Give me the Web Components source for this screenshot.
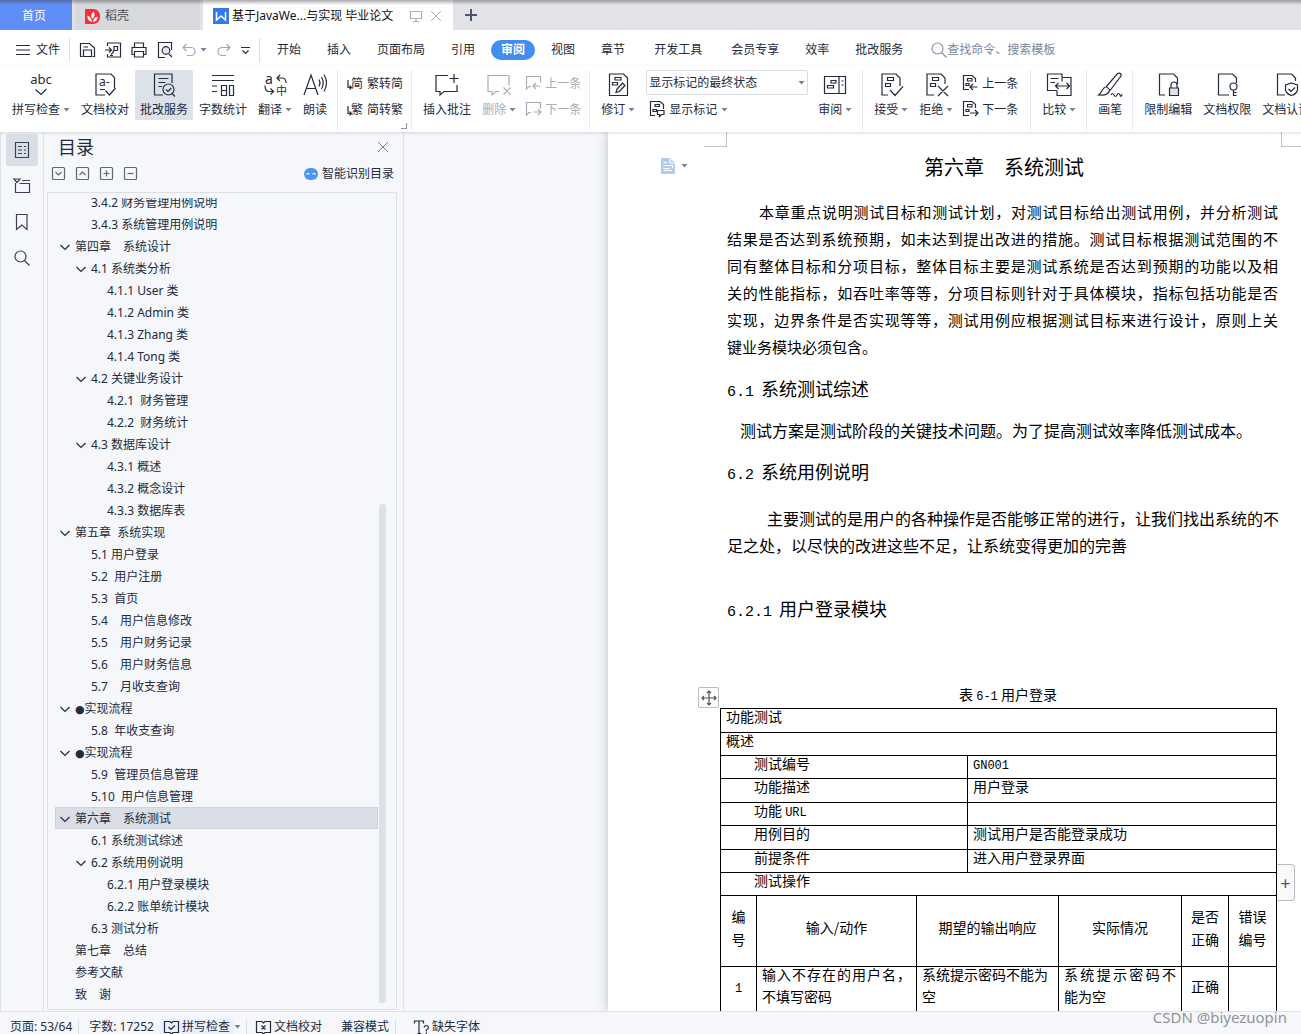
<!DOCTYPE html>
<html lang="zh-CN">
<head>
<meta charset="utf-8">
<title>基于JavaWeb 毕业论文</title>
<style>
  html, body { margin: 0; height: 100%; }
  body { font: 12px/16px "Noto Sans", "Noto Sans CJK SC", sans-serif; color: #232b3d; background: #f5f7fa; overflow: hidden; }
</style>
</head>
<body>
<wps-app></wps-app>
<script>
const ICONS = {
  caret: [7, 4, '<path d="M.5 0h6L3.500 3.500z" fill="#76809a" stroke="none"/>'],
  chev: [10, 10, '<path d="M.5 3 5 7.500 9.500 3"/>'],
  close: [12, 12, '<path d="M1 1l10 10M11 1 1 11" stroke-width="1"/>'],
  plus: [12, 12, '<path d="M6 0v12M0 6h12" stroke-width="2"/>'],
  docer: [15, 15, '<path d="M0 0h8.500a6.500 6.500 0 0 1 6.500 6.500v2A6.500 6.500 0 0 1 8.500 15H0z" fill="#fb2d3c" stroke="none"/><path d="M7 13C3.500 12 2 9.500 2.500 6.500 5 7.500 6.500 9 7 13zM7.300 10C5.500 7 6 4.500 8.800 2.500 10.300 5 9.800 8 7.300 10zM8 13c.3-3 1.800-4.800 4.700-5.500.2 3-1.500 5-4.700 5.500z" fill="#fff" stroke="none"/>'],
  writer: [16, 16, '<rect width="16" height="16" fill="#3478f0" stroke="none"/><path d="M3.500 4v8L8 8l4.500 4V4" stroke="#fff" stroke-width="1.500"/>'],
  screen: [12, 12, '<path d="M.5 1.500h11v7H.5zM6 8.500v3M3 11.500h6"/>'],
  menu: [14, 12, '<path d="M0 1.500h14M0 6h14M0 10.500h14"/>'],
  save: [16, 16, '<path d="M3.500 14.500H1.500V1.500H10.500l5 4.500v8.500h-2M4.500 14.500V8h8v6.500zM4.500 5H9"/>'],
  pdf: [16, 16, '<path d="M2.500 4V1h13v14h-13v-3M0 8h6M4 5.500 6.500 8 4 10.500M6 12.500c3-2 3.500-6 3-8h3.500v4H9M5 13.500h3"/>'],
  print: [16, 16, '<path d="M3.500 5V1h9v4M3.500 12.500H1V5.500h14v7h-2.500M3.500 9.500h9V15h-9z"/>'],
  preview: [16, 16, '<path d="M8 15.500H1.500V.5h13V8M15 15l-3-3"/><circle cx="9" cy="8.500" r="3.800" fill="#dfe3ea"/>'],
  undo: [14, 14, '<path d="M4.500 1 1 4.500 4.500 8M1 4.500h8a4 4 0 0 1 0 8H5"/>'],
  redo: [14, 14, '<path d="M9.500 1 13 4.500 9.500 8M13 4.500H5a4 4 0 0 0 0 8h4"/>'],
  more: [9, 9, '<path d="M0 1.500h9M1.500 4.500 4.500 7.500l3-3"/>'],
  search: [16, 16, '<circle cx="6.500" cy="6.500" r="5.500"/><path d="M10.500 10.500 15.500 15.500"/>'],
  abc: [24, 24, '<text x="12" y="11" text-anchor="middle" font-size="13">abc</text><path d="M6.500 16.500l5.500 5L17.500 16"/>'],
  proof: [24, 24, '<path d="M12 22H3V1h15l3.500 3.500V15M7 16.500h5M12.500 17.500l4 4.500 6-7"/><text x="6" y="13" font-size="12">a-</text>'],
  correct: [24, 24, '<path d="M11 22H2.500V1H20v9M6.500 5.500h10M6.500 9.500h7M6.500 13.500H10M20 20.500l3 3"/><circle cx="16.500" cy="16.500" r="5.500"/><path d="M14 16.500l2 2 3.200-3.500"/>'],
  count: [24, 24, '<path d="M1 2.500h22M1 7.500h22M1 13h5M1 18.500h5M10.500 12.500h5v10h-5zM18.500 12.500h4v10h-4zM10.500 17.500h5"/>'],
  trans: [24, 24, '<text x="2" y="11" font-size="14">a</text><path d="M17 2l-3 3 3 3M14 5h5c3 0 4 1.500 4 5M2 12.500c0 5 1.500 6 4 6h4M7.500 15.500l3 3-3 3"/><text x="13" y="22" font-size="11">中</text>'],
  read: [24, 24, '<path d="M1 22 8 2l7 20M3.500 15.500h9M16 6.500q2 3.500 0 7M18.500 4q3.500 6 0 12M21 1.500q5 8.500 0 17"/>'],
  t2s: [16, 16, '<text x="4" y="13" font-size="12">简</text><path d="M1 5v7.500h3M2.500 10.500l2 2-2 2"/>'],
  s2t: [16, 16, '<text x="4" y="13" font-size="12">繁</text><path d="M1 5v7.500h3M2.500 10.500l2 2-2 2"/>'],
  addnote: [24, 24, '<path d="M13 2.500H1v16h4V22l4-3.500h13V12M19 1v9M14.500 5.500h9"/>'],
  delnote: [24, 24, '<path d="M12 18.500H9L5 22v-3.500H1v-16h21v10M16.500 14.500l7 7M23.500 14.500l-7 7"/>'],
  prevnote: [16, 16, '<path d="M6 11.500H4L1.500 14V1.500h14v6M15.500 11H8.500M11 8l-3 3 3 3"/>'],
  nextnote: [16, 16, '<path d="M6 11.500H4L1.500 14V1.500h14v6M8.500 11h7M13 8l3 3-3 3"/>'],
  revise: [24, 24, '<path d="M3.500 1h14l4 4v17.500h-18zM9 4.500h6v2.500H9zM6.500 9.500h5v2.500h-5z"/><path d="M10 19.500l1-3.500 5.500-6 2.500 2.500-5.500 6z" fill="#e4e7ed"/>'],
  marks: [16, 16, '<path d="M6 14.500H1.500v-14H11l3.500 3V8M6 3.500h4.500v2H6zM4 8.500h3.500v2H4zM8.500 9.500h6.500v4h-2.500l-2 2v-2h-2z"/>'],
  pane: [24, 24, '<path d="M1.500 3.500h21v17h-21zM16 3.500v17M8 7.500h5v2.500H8zM4.500 12.500h6V15h-6zM18.500 8h2M18.500 12h2"/>'],
  accept: [24, 24, '<path d="M9 22H3V1h14l4 4v8M8.500 4.500h6v3h-6zM6.500 10.500h5v3h-5zM11 17l5 5.500 8-9"/>'],
  reject: [24, 24, '<path d="M10 22H3V1h14l4 4v6M8.500 4.500h6v3h-6zM6.500 10.500h5v3h-5zM14 13l10 10M24 13 14 23"/>'],
  prevrev: [16, 16, '<path d="M7 14.500H1.500v-14H10l3.500 3V7M5.500 3.500H10v2.500H5.500zM4 8.500h3v2H4zM15.500 12H8.500M11 9l-3 3 3 3"/>'],
  nextrev: [16, 16, '<path d="M7 14.500H1.500v-14H10l3.500 3V7M5.500 3.500H10v2.500H5.500zM4 8.500h3v2H4zM8 12h7.500M13 9l3 3-3 3"/>'],
  compare: [24, 24, '<path d="M10 17.500H.5V1H15v3M3.500 5.500h8M3.500 9.500H8M15 4.500h9v18H10v-5M15 4.500v4M8.500 13h14M11.500 10l-3 3 3 3M19.500 10l3 3-3 3"/>'],
  brush: [24, 24, '<path d="M8 14 19.500.5q2-1 3.500.5v2L12 17.500M8 14q2.500.5 4 3.500M7.500 14C4 15 4.500 19.500.5 22c5 .5 10 0 11-4.500M13 22q1.500-3 3 0t3 0 3 0 2-1"/>'],
  lock: [24, 24, '<path d="M9 22H3.500V1h14l4 4v6"/><path d="M13.500 15h9v7.500h-9z" fill="#dde1e8"/><path d="M15 15v-3a3 3 0 0 1 6 0v3"/>'],
  key: [24, 24, '<path d="M14 22H3.500V1h14l4 4v5M18.500 17v6M18.500 19.500h3M18.500 22.500h3"/><circle cx="18.500" cy="13.500" r="3.500"/>'],
  shield: [24, 24, '<path d="M11 22H3.500V1h14l4 4v3M17.500 10l6 2v5q-1 4-6 5.500-5-1.500-6-5.500v-5zM14.500 16l2.500 2.500 4-4"/>'],
  outline: [16, 16, '<path d="M1.500.5h13v15h-13zM4 4.500h4M10 4.500h2M4 8h4M10 8h2M4 11.500h4M10 11.500h2"/>'],
  tree: [16, 16, '<path d="M0 1h6L3 4.500zM8 2.500h8M1.500 5v9.500h14v-9h-10"/>'],
  mark: [16, 16, '<path d="M2.500 .5h10.500V15.500L7.750 11 2.500 15.500z"/>'],
  boxdown: [13, 13, '<rect x=".5" y=".5" width="12" height="12" rx="1"/><path d="M3.500 5l3 3 3-3"/>'],
  boxup: [13, 13, '<rect x=".5" y=".5" width="12" height="12" rx="1"/><path d="M3.500 8l3-3 3 3"/>'],
  boxplus: [13, 13, '<rect x=".5" y=".5" width="12" height="12" rx="1"/><path d="M3.500 6.500h6M6.500 3.500v6"/>'],
  boxminus: [13, 13, '<rect x=".5" y=".5" width="12" height="12" rx="1"/><path d="M3.500 6.500h6"/>'],
  robot: [14, 12, '<rect y="0" width="14" height="12" rx="6" fill="#4b97f5" stroke="none"/><path d="M2.500 6.500q1.500-2 3 0M8.500 6.500q1.500-2 3 0" stroke="#fff"/>'],
  pagefmt: [14, 16, '<path d="M0 0h9l5 5v11H0z" fill="#b5cbec" stroke="none"/><path d="M9 0v5h5M2.500 4.500h4M2.500 7.500h9v2.500M2.500 10.500h6M3 12.500h8" stroke="#fff"/>'],
  move: [16, 16, '<path d="M8 1v14M1 8h14M6 3l2-2 2 2M6 13l2 2 2-2M3 6 1 8l2 2M13 6l2 2-2 2"/>'],
  bookcheck: [15, 14, '<path d="M6 1.500H.5v11H6L7.500 14 9 12.500h5.500v-11H9L7.500 3zM4.500 7l2.500 2.500 4-4"/>'],
  bookx: [15, 14, '<path d="M6 1.500H.5v11H6L7.500 14 9 12.500h5.500v-11H9L7.500 3zM5.500 5.500l4 4M9.500 5.500l-4 4"/>'],
  font: [15, 14, '<path d="M.5 3.500V1h9v2.500M5 1v12M3.500 13.500h3.500M10 7.500q.5-2 2.300-2t2.200 2q0 1.300-2.200 2.500v1.500M12.300 12.500v1.500"/>'],
  corner: [6, 6, '<path d="M5.500 0v5.500H0"/>']
};

class WpsIcon extends HTMLElement {
  connectedCallback() {
    const [w, h, body] = ICONS[this.getAttribute('name')];
    this.attachShadow({ mode: 'open' }).innerHTML = `<style>:host{display:inline-flex;flex:none}
      svg{display:block;fill:none;stroke:currentColor;stroke-width:1.2;overflow:visible}
      text{fill:currentColor;stroke:none;font-family:"Noto Sans","Noto Sans CJK SC",sans-serif}</style>
      <svg width="${w}" height="${h}" viewBox="0 0 ${w} ${h}" aria-hidden="true">${body}</svg>`;
  }
}
customElements.define('wps-icon', WpsIcon);

const BASE = `<style>*{box-sizing:border-box}button{font:inherit;color:inherit;background:none;border:0;margin:0;padding:0;display:flex;align-items:center;white-space:nowrap}</style>`;
const define = (name, render) => customElements.define(name, class extends HTMLElement {
  connectedCallback() { this.attachShadow({ mode: 'open' }).innerHTML = BASE + render(this); }
});
const icon = n => `<wps-icon name="${n}"></wps-icon>`;

define('wps-tabs', () => `<style>
  :host{display:flex;height:30px;background:#e2e3e7;gap:3px;position:relative}
  :host::after{content:"";position:absolute;inset:0 0 auto;height:5px;background:linear-gradient(rgba(70,70,75,.45),rgba(70,70,75,0))}
  button{height:30px;gap:5px;padding-top:2px}
  .home{width:72px;justify-content:center;padding-right:4px;background:#5f8ef8;color:#fff}
  .doc{width:125px;padding-left:10px;background:#d8d9dc;color:#4a4f5a}
  .on{width:250px;padding-left:10px;background:#fff;color:#111;gap:3px}
  .on .s{display:flex;color:#a9b0c6;margin-left:14px}.on .s+.s{margin-left:5px}
  .add{margin-left:9px;color:#4c5674;padding:0}
  </style><button class="home">首页</button><button class="doc">${icon('docer')}稻壳</button>
  <button class="on">${icon('writer')}<span>基于JavaWe...与实现 毕业论文</span><span class="s">${icon('screen')}</span><span class="s">${icon('close')}</span></button>
  <button class="add" aria-label="新建">${icon('plus')}</button>`);

define('wps-menu', () => `<style>
  :host{display:flex;align-items:center;height:36px;background:#fff;padding:4px 0 0 16px;overflow:hidden}
  .file{gap:6px}.sep{width:1px;height:24px;background:#dcdfe5;margin:0 9px}
  .quick{display:flex;align-items:center;gap:10px}.dim{color:#a3a8b3}
  .dim.u{gap:4px;margin-left:-1px}
  nav{display:flex;align-items:center;margin-left:-5px}
  nav button{padding:0 13px}nav .w{padding:0 16px}
  nav .on{margin:0 3px;padding:0 10px;height:20px;border-radius:10px;background:#438cf1;color:#fff;font-weight:700}
  label{display:flex;align-items:center;margin-left:15px;color:#8b94a8;flex:1}
  input{font:inherit;border:0;outline:0;padding:0;background:none;width:100%;min-width:0}
  input::placeholder{color:#7c869c;opacity:1}
  </style><button class="file">${icon('menu')}文件</button><span class="sep"></span>
  <div class="quick"><button aria-label="保存">${icon('save')}</button><button aria-label="输出PDF">${icon('pdf')}</button><button aria-label="打印">${icon('print')}</button><button aria-label="预览">${icon('preview')}</button>
  <button class="dim u" aria-label="撤销">${icon('undo')}${icon('caret')}</button><button class="dim" aria-label="恢复">${icon('redo')}</button><button aria-label="更多">${icon('more')}</button></div><span class="sep"></span>
  <nav><button>开始</button><button>插入</button><button>页面布局</button><button>引用</button><button class="on">审阅</button><button>视图</button><button>章节</button><button class="w">开发工具</button><button>会员专享</button><button>效率</button><button>批改服务</button></nav>
  <label>${icon('search')}<input type="text" aria-label="查找" placeholder="查找命令、搜索模板"></label>`);

define('ribbon-button', el => `<style>
  :host{display:block;flex:none}
  button{flex-direction:column;height:50px;padding:3px 5px 0;border-radius:2px}
  .t{display:flex;align-items:center;gap:3px;margin-top:5px}
  .i{display:flex}
  :host([small]) button{flex-direction:row;height:26px;padding:0 3px;gap:4px}
  :host([small]) .t{margin:0;gap:4px;padding-top:2px}
  :host([on]) button{background:#dce2e8}
  :host([off]) button{color:#a9adb6}
  </style><button><span class="i">${icon(el.getAttribute('icon'))}</span><span class="t"><span><slot></slot></span>${el.hasAttribute('caret') ? icon('caret') : ''}</span></button>`);

const big = (i, t, a = '') => `<ribbon-button icon="${i}" ${a}>${t}</ribbon-button>`;
const sm = (i, t, a = '') => big(i, t, 'small ' + a);
define('wps-ribbon', () => `<style>
  :host{display:flex;height:66px;background:#fff;padding:4px 0 0 7px;gap:1px;overflow:hidden;position:relative;z-index:1;box-shadow:0 1px 3px rgba(0,0,0,.15)}
  .sep{flex:none;width:1px;height:60px;background:#e9ebef;margin:0 5px 0 4px}
  .col{display:flex;flex-direction:column;flex:none}
  .end{position:relative}.end>wps-icon{position:absolute;right:-1px;bottom:3px;color:#8e96a8}
  .state{padding:0 4px 0 5px}.wide{padding-right:4px}
  .pick{display:grid;align-items:center;justify-items:end;margin-bottom:1px}
  .pick>*{grid-area:1/1}.pick wps-icon{margin-right:3px;pointer-events:none}
  select{appearance:none;font:inherit;color:inherit;width:162px;height:25px;border:1px solid #d9dce3;border-radius:2px;background:#fff;padding:0 16px 0 2px}
  </style>
  ${big('abc', '拼写检查', 'caret')}${big('proof', '文档校对')}${big('correct', '批改服务', 'on')}${big('count', '字数统计')}${big('trans', '翻译', 'caret')}${big('read', '朗读')}<span class="sep"></span>
  <div class="col end">${sm('t2s', '繁转简')}${sm('s2t', '简转繁')}${icon('corner')}</div><span class="sep"></span>
  ${big('addnote', '插入批注')}${big('delnote', '删除', 'caret off')}<div class="col">${sm('prevnote', '上一条', 'off')}${sm('nextnote', '下一条', 'off')}</div><span class="sep"></span>
  ${big('revise', '修订', 'caret')}<div class="col state"><label class="pick"><select aria-label="标记状态"><option>显示标记的最终状态</option></select>${icon('caret')}</label>${sm('marks', '显示标记', 'caret')}</div>
  ${big('pane', '审阅', 'caret')}<span class="sep"></span>
  ${big('accept', '接受', 'caret')}${big('reject', '拒绝', 'caret')}<div class="col wide">${sm('prevrev', '上一条')}${sm('nextrev', '下一条')}</div><span class="sep"></span>
  ${big('compare', '比较', 'caret')}<span class="sep"></span>${big('brush', '画笔')}<span class="sep"></span>${big('lock', '限制编辑')}${big('key', '文档权限')}${big('shield', '文档认证')}`);

define('side-rail', () => `<style>
  :host{display:flex;flex-direction:column;gap:4px;flex:none;width:44px;padding:2px 0 0 5px;border:solid #dfe2e8;border-width:0 1px;color:#39425a}
  button{width:32px;height:32px;justify-content:center;border-radius:2px}.on{background:#dadfe7}
  </style><button class="on" aria-label="目录">${icon('outline')}</button><button aria-label="章节">${icon('tree')}</button><button aria-label="书签">${icon('mark')}</button><button aria-label="查找">${icon('search')}</button>`);

define('toc-item', el => `<style>
  :host{display:flex;align-items:center;height:22px;box-sizing:border-box;white-space:pre;padding:2px 0 0 calc(4px + 16px*var(--lv,0));border:1px solid transparent}
  :host([lv="1"]){--lv:1}:host([lv="2"]){--lv:2}
  :host([on]){background:#dadee6;border-color:#cdd3de}
  .c{width:15px;display:flex;align-items:center}
  ::slotted(b){font:11px/16px "DejaVu Sans"}
  </style><span class="c">${el.hasAttribute('open') ? icon('chev') : ''}</span><span><slot></slot></span>`);

const TOC = [
  [1, '3.4.2 财务管理用例说明'], [1, '3.4.3 系统管理用例说明'], [0, '第四章　系统设计', 'open'], [1, '4.1 系统类分析', 'open'],
  [2, '4.1.1 User 类'], [2, '4.1.2 Admin 类'], [2, '4.1.3 Zhang 类'], [2, '4.1.4 Tong 类'], [1, '4.2 关键业务设计', 'open'],
  [2, '4.2.1  财务管理'], [2, '4.2.2  财务统计'], [1, '4.3 数据库设计', 'open'], [2, '4.3.1 概述'], [2, '4.3.2 概念设计'], [2, '4.3.3 数据库表'],
  [0, '第五章  系统实现', 'open'], [1, '5.1 用户登录'], [1, '5.2  用户注册'], [1, '5.3  首页'], [1, '5.4　用户信息修改'], [1, '5.5　用户财务记录'],
  [1, '5.6　用户财务信息'], [1, '5.7　月收支查询'], [0, '<b>●</b>实现流程', 'open'], [1, '5.8  年收支查询'], [0, '<b>●</b>实现流程', 'open'],
  [1, '5.9  管理员信息管理'], [1, '5.10  用户信息管理'], [0, '第六章　系统测试', 'open on'], [1, '6.1 系统测试综述'], [1, '6.2 系统用例说明', 'open'],
  [2, '6.2.1 用户登录模块'], [2, '6.2.2 账单统计模块'], [1, '6.3 测试分析'], [0, '第七章　总结'], [0, '参考文献'], [0, '致　谢']];
define('toc-panel', () => `<style>
  :host{display:flex;flex-direction:column;flex:none;width:360px;padding:0 6px 1px 3px;border-right:1px solid #dfe2e8}
  header{display:flex;justify-content:space-between;align-items:center;height:29px;padding:0 8px 0 11px}
  h2{font-size:18px;line-height:24px;font-weight:400;margin:0}header button{color:#737b8d}
  .tools{display:flex;align-items:center;gap:11px;padding:0 3px 0 5px;height:24px;color:#5f6778}
  .smart{margin-left:auto;gap:4px;color:#232b3d;padding-top:2px}
  .box{flex:1;min-height:0;margin-top:7px;border:1px solid #dde0e7;border-radius:2px;padding:5px 10px 6px 7px;display:flex}
  .list{flex:1;overflow:hidden}toc-item:first-child{margin-top:-7px}
  .bar{width:7px;margin-left:1px;display:flex;align-items:flex-end}.bar i{width:7px;height:62%;background:#dde1e5;border-radius:3px}
  </style><header><h2>目录</h2><button aria-label="关闭">${icon('close')}</button></header>
  <div class="tools"><button aria-label="展开">${icon('boxdown')}</button><button aria-label="收起">${icon('boxup')}</button><button aria-label="增加">${icon('boxplus')}</button><button aria-label="减少">${icon('boxminus')}</button><button class="smart">${icon('robot')}智能识别目录</button></div>
  <div class="box"><div class="list">${TOC.map(([l, t, a = '']) => `<toc-item lv="${l}" ${a}>${t}</toc-item>`).join('')}</div><div class="bar"><i></i></div></div>`);

define('case-table', () => `<style>
  :host{display:block;width:556px;margin-left:-7px;font-size:14px;line-height:15px;position:relative;white-space:normal}
  table{border-collapse:collapse;table-layout:fixed;width:556px}
  td,th{border:1px solid #000;padding:0 5px;vertical-align:top;font-weight:400;text-align:left}
  tr{height:23px}tr.h{height:24px}td.in{padding-left:33px}
  code{font:12px/15px "Liberation Mono",monospace}
  .head{height:71px}.head th{vertical-align:middle;text-align:center;line-height:23px;padding-bottom:7px}
  .row{height:48px}.row td{line-height:22px}.row td.m{vertical-align:middle;text-align:center;padding-bottom:5px}
  .row div{margin-top:-4px}
  .j span{display:block;text-align-last:justify}
  button{position:absolute;justify-content:center;border:1px solid #b9bcc2;background:#fff;color:#555}
  .mv{left:-22px;top:-21px;width:21px;height:21px;border-radius:2px}
  .add{right:-19px;top:156px;width:18px;height:37px;border-left:0;border-radius:0 4px 4px 0;font:18px/18px "Noto Sans",sans-serif;background:#fafafa}
  </style>
  <button class="mv" aria-label="移动表格">${icon('move')}</button><button class="add" aria-label="添加列">+</button>
  <table><colgroup><col style="width:36px"><col style="width:160px"><col style="width:51px"><col style="width:91px"><col style="width:123px"><col style="width:47px"><col style="width:48px"></colgroup>
  <tr class="h"><td colspan="7">功能测试</td></tr><tr><td colspan="7">概述</td></tr>
  <tr><td class="in" colspan="3">测试编号</td><td colspan="4"><code>GN001</code></td></tr>
  <tr class="h"><td class="in" colspan="3">功能描述</td><td colspan="4">用户登录</td></tr>
  <tr><td class="in" colspan="3">功能 <code>URL</code></td><td colspan="4"></td></tr>
  <tr class="h"><td class="in" colspan="3">用例目的</td><td colspan="4">测试用户是否能登录成功</td></tr>
  <tr><td class="in" colspan="3">前提条件</td><td colspan="4">进入用户登录界面</td></tr>
  <tr><td class="in" colspan="7">测试操作</td></tr>
  <tr class="head"><th>编<br>号</th><th>输入/动作</th><th colspan="2">期望的输出响应</th><th>实际情况</th><th>是否正确</th><th>错误编号</th></tr>
  <tr class="row"><td class="m"><div><code>1</code></div></td><td class="j"><div><span>输入不存在的用户名，</span>不填写密码</div></td><td colspan="2"><div>系统提示密码不能为空</div></td><td class="j"><div><span>系统提示密码不</span>能为空</div></td><td class="m"><div>正确</div></td><td></td></tr>
  </table>`);

define('doc-view', () => `<style>
  :host{display:flex;flex:1;min-width:0;overflow:hidden;padding-left:204px;font-family:"Noto Sans CJK SC",sans-serif;color:#000}
  article{flex:1;min-width:0;background:#fff;padding:22px 20px 0 119px;box-shadow:0 0 10px rgba(40,45,60,.28);position:relative;white-space:nowrap}
  .fmt{position:absolute;left:53px;top:26px;gap:6px}
  .c{position:absolute;top:0;width:23px;height:15px;border:solid #c4c4c4;border-width:0 1px 1px 0}
  .c.l{left:96px}.c.r{right:-3px;border-width:0 0 1px 1px}
  h1,h2,h3{margin:0;font-weight:400}
  h1{font-size:20px;line-height:26px;text-align:center;margin-bottom:18px}
  h2,h3{font-size:18px;line-height:24px;height:24px;margin-top:15px;display:flex;gap:7px;align-items:baseline}h3{margin-top:37px}
  kbd{font:15px/24px "Liberation Mono",monospace}code{font:12px/16px "Liberation Mono",monospace}
  p{margin:0;width:551px;font-size:16px;line-height:27px}
  p.intro{font-size:15px;margin-bottom:16px}.intro span{display:block;text-align-last:justify}.intro span:first-child{padding-left:32px}
  .one{padding-left:13px;margin-top:17px}.two{text-indent:40px;margin-top:22px}
  .cap{font-size:14px;line-height:20px;text-align:center;text-indent:8px;margin:64px 0 3px;width:auto}
  </style><article><button class="fmt" aria-label="格式">${icon('pagefmt')}${icon('caret')}</button><i class="c l"></i><i class="c r"></i>
  <h1>第六章　系统测试</h1>
  <p class="intro"><span>本章重点说明测试目标和测试计划，对测试目标给出测试用例，并分析测试</span><span>结果是否达到系统预期，如未达到提出改进的措施。测试目标根据测试范围的不</span><span>同有整体目标和分项目标，整体目标主要是测试系统是否达到预期的功能以及相</span><span>关的性能指标，如吞吐率等等，分项目标则针对于具体模块，指标包括功能是否</span><span>实现，边界条件是否实现等等，测试用例应根据测试目标来进行设计，原则上关</span>键业务模块必须包含。</p>
  <h2><kbd>6.1</kbd>系统测试综述</h2><p class="one">测试方案是测试阶段的关键技术问题。为了提高测试效率降低测试成本。</p>
  <h2><kbd>6.2</kbd>系统用例说明</h2><p class="two">主要测试的是用户的各种操作是否能够正常的进行，让我们找出系统的不<br>足之处，以尽快的改进这些不足，让系统变得更加的完善</p>
  <h3><kbd>6.2.1</kbd>用户登录模块</h3><p class="cap">表 <code>6-1</code> 用户登录</p><case-table></case-table></article>`);

define('status-bar', () => `<style>
  :host{display:flex;align-items:center;height:23px;box-sizing:border-box;border-top:1px solid #dfe2e8;background:#f5f7fa;padding:8px 0 0 10px;position:relative;z-index:2;white-space:nowrap}
  .sep{width:1px;height:14px;background:#d8dbe2;margin:0 10px 0 6px}
  button{gap:3px}.spell{background:#e8f1fc;padding:0 4px;margin-left:6px;height:16px}
  .mode{margin-left:19px}.font{margin-left:8px}.mark{position:absolute;right:14px;bottom:7px;font-size:15px;line-height:20px;color:#8f9298;text-shadow:0 0 1px #fff}
  wps-icon+.sep{margin:0 9px 0 5px}
  </style><span>页面: 53/64</span><span class="sep"></span><span>字数: 17252</span><button class="spell">${icon('bookcheck')}拼写检查</button>${icon('caret')}<span class="sep"></span>
  <button>${icon('bookx')}文档校对</button><button class="mode">兼容模式</button><span class="sep"></span><button class="font">${icon('font')}缺失字体</button><span class="mark">CSDN @biyezuopin</span>`);

define('wps-app', () => `<style>
  :host{display:flex;flex-direction:column;height:100vh}
  main{display:flex;flex:1;min-height:0;overflow:hidden}
  </style><wps-tabs></wps-tabs><wps-menu></wps-menu><wps-ribbon></wps-ribbon><main><side-rail></side-rail><toc-panel></toc-panel><doc-view></doc-view></main><status-bar></status-bar>`);
</script>
</body>
</html>
